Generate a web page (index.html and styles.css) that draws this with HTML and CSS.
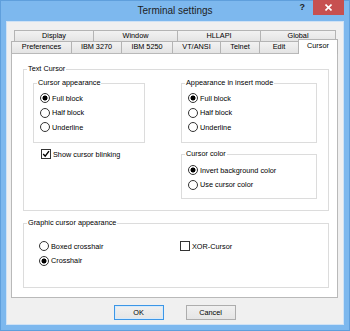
FILE: index.html
```html
<!doctype html>
<html lang="en">
  <head>
    <meta charset="UTF-8" />
    <title>Terminal settings</title>
    <link rel="stylesheet" href="styles.css">
  </head>
  <body>
    <div class="window">
      <div class="titlebar">
        <div></div>
        <div class="title">Terminal settings</div>
        <div class="controls">
          <span class="help">?</span>
          <span class="close">
            <svg width="7" height="7" viewBox="0 0 7 7"><path d="M0.5 0.5 L6.5 6.5 M6.5 0.5 L0.5 6.5" stroke="#fff" stroke-width="1.6" /></svg>
          </span>
        </div>
      </div>

      <div class="client">
        <div class="tab-row back">
          <div class="tab">Display</div>
          <div class="tab">Window</div>
          <div class="tab">HLLAPI</div>
          <div class="tab last">Global</div>
        </div>
        <div class="tab-row front">
          <div class="tab">Preferences</div>
          <div class="tab">IBM 3270</div>
          <div class="tab">IBM 5250</div>
          <div class="tab">VT/ANSI</div>
          <div class="tab">Telnet</div>
          <div class="tab">Edit</div>
          <div class="tab last selected">Cursor</div>
        </div>

        <div class="panel">
          <fieldset class="group">
            <legend>Text Cursor</legend>
            <div class="text-cursor">
              <div class="col">
                <fieldset class="group">
                  <legend>Cursor appearance</legend>
                  <div class="choices">
                    <div class="radio checked">Full block</div>
                    <div class="radio">Half block</div>
                    <div class="radio">Underline</div>
                  </div>
                </fieldset>
                <div class="check checked blink">
                  <span class="box"><svg width="8" height="8" viewBox="0 0 8 8"><path d="M1.2 4 L3.2 6.2 L7 1.2" fill="none" stroke="#000" stroke-width="1.4" /></svg></span>
                  Show cursor blinking
                </div>
              </div>
              <div class="col">
                <fieldset class="group">
                  <legend>Appearance in insert mode</legend>
                  <div class="choices">
                    <div class="radio checked">Full block</div>
                    <div class="radio">Half block</div>
                    <div class="radio">Underline</div>
                  </div>
                </fieldset>
                <fieldset class="group color">
                  <legend>Cursor color</legend>
                  <div class="choices short">
                    <div class="radio checked">Invert background color</div>
                    <div class="radio">Use cursor color</div>
                  </div>
                </fieldset>
              </div>
            </div>
          </fieldset>

          <fieldset class="group graphic">
            <legend>Graphic cursor appearance</legend>
            <div class="graphic-body">
              <div>
                <div class="radio">Boxed crosshair</div>
                <div class="radio checked">Crosshair</div>
              </div>
              <div>
                <div class="check">
                  <span class="box"></span>
                  XOR-Cursor
                </div>
              </div>
            </div>
          </fieldset>
        </div>

        <div class="buttons">
          <button class="default">OK</button>
          <button>Cancel</button>
        </div>
      </div>
    </div>
  </body>
</html>
```

FILE: styles.css
```css
body {
  margin: 0;
  font-family: "Liberation Sans", Arial, sans-serif;
  font-size: 7.3px;
  color: #000;
}
.window {
  width: 350px;
  height: 331px;
  box-sizing: border-box;
  background: #7db8ee;
  border: 1px solid #5f9fdc;
  display: flex;
  flex-direction: column;
}
.titlebar {
  height: 20px;
  display: grid;
  grid-template-columns: 1fr auto 1fr;
}
.title {
  font-size: 10px;
  line-height: 20px;
  color: #1e1e1e;
}
.controls {
  display: flex;
  justify-content: flex-end;
  align-items: flex-start;
}
.help {
  font-size: 9px;
  font-weight: bold;
  line-height: 12px;
  color: #222;
  margin-right: 8px;
}
.close {
  width: 31px;
  height: 15px;
  margin-top: -1px;
  margin-right: 5px;
  background: #c75050;
  display: flex;
  align-items: center;
  justify-content: center;
}
.close svg {
  display: block;
}
.client {
  flex: 1;
  margin: 0 5px 5px 5px;
  border: 1px solid #cfe2f5;
  background: #f0f0f0;
  padding: 8px 5px 0 4px;
  display: flex;
  flex-direction: column;
}

/* tabs */
.tab-row {
  display: grid;
}
.tab-row.back {
  grid-template-columns: 79px 84px 83px 76px;
  margin-left: 3px;
  height: 11px;
}
.tab-row.front {
  grid-template-columns: 60px 50px 51px 48px 39px 39px 40px;
  height: 12px;
}
.tab {
  border: 1px solid #b4b4b4;
  border-right: none;
  border-bottom: none;
  background: linear-gradient(#f2f2f2, #e4e4e4);
  text-align: center;
  line-height: 10px;
  white-space: nowrap;
}
.tab.last {
  border-right: 1px solid #b4b4b4;
}
.tab.selected {
  background: #fff;
  margin-top: -2px;
  margin-bottom: -1px;
  line-height: 12px;
  position: relative;
  z-index: 1;
}
.panel {
  flex: 1;
  background: #fff;
  border: 1px solid #b9b9b9;
  padding: 10px 8px 9px 11px;
  display: flex;
  flex-direction: column;
}

/* group boxes */
.group {
  margin: 0;
  padding: 0;
  min-width: 0;
  border: 1px solid #dcdcdc;
}
.group legend {
  margin-left: 3px;
  padding: 0 1px;
  line-height: 10px;
}
.text-cursor {
  display: grid;
  grid-template-columns: 112px 136px;
  column-gap: 36px;
  padding: 4px 11px 11px 9px;
}
.choices {
  padding: 3px 0 7.5px 6px;
}
.choices.short {
  padding: 4px 0 6px 6px;
}
.group.color {
  margin-top: 6px;
}
.radio {
  display: flex;
  align-items: center;
  height: 14.5px;
  white-space: nowrap;
}
.radio::before {
  content: "";
  width: 8px;
  height: 8px;
  border: 1px solid #333;
  border-radius: 50%;
  background: #fff;
  margin-right: 2px;
}
.radio.checked::before {
  background: radial-gradient(circle, #000 0 2.2px, #fff 2.8px);
}
.check {
  display: flex;
  align-items: center;
  height: 14px;
  white-space: nowrap;
}
.check.blink {
  margin-top: 4px;
  margin-left: 8px;
}
.box {
  width: 8px;
  height: 8px;
  border: 1px solid #333;
  background: #fff;
  margin-right: 2px;
  display: flex;
  align-items: center;
  justify-content: center;
}
.box svg {
  display: block;
}
.group.graphic {
  flex: 1;
  margin-top: 7px;
}
.graphic-body {
  display: grid;
  grid-template-columns: 141px 1fr;
  padding: 11px 0 0 15px;
}

/* buttons */
.buttons {
  display: flex;
  justify-content: center;
  gap: 22px;
  margin: 7px 0 4px;
}
button {
  width: 50px;
  height: 15px;
  padding: 0;
  font-family: inherit;
  font-size: 7.3px;
  color: #000;
  border: 1px solid #adadad;
  background: linear-gradient(#f0f0f0, #e5e5e5);
}
button.default {
  border-color: #3c96e6;
  box-shadow: inset 0 0 0 1px #d6eafb;
}
```
